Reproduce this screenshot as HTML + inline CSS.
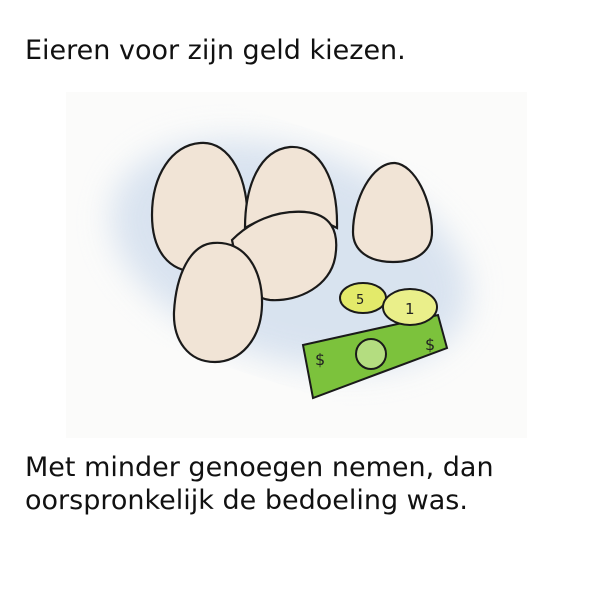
<!DOCTYPE html>
<html><head><style>
html,body{margin:0;padding:0;background:#fff;width:591px;height:591px;overflow:hidden}
.t{position:absolute;left:25px;font-family:"DejaVu Sans","Liberation Sans",sans-serif;font-size:27px;color:#111;line-height:33px;white-space:nowrap}
svg{position:absolute;left:0;top:0}
</style></head><body>
<div class="t" style="top:34px">Eieren voor zijn geld kiezen.</div>
<svg width="591" height="591" viewBox="0 0 591 591">
<defs><filter id="b"><feGaussianBlur stdDeviation="16"/></filter></defs>
<rect x="66" y="92" width="461" height="346" fill="#fbfbfa"/>
<ellipse cx="290" cy="255" rx="185" ry="105" transform="rotate(18 290 255)" fill="#d3dfee" opacity="0.85" filter="url(#b)"/>
<g stroke="#1a1a1a" stroke-width="2.2" fill="#f1e4d6">
<path d="M200 143 C230 140 250 180 247 225 C244 258 225 272 198 272 C168 272 152 250 152 215 C152 175 172 145 200 143Z"/>
<path d="M290 147 C320 145 338 180 337 228 L305 212 C280 210 255 222 245 228 C245 185 260 150 290 147Z"/>
<path d="M232 240 C250 222 275 210 305 212 C330 214 340 230 335 258 C330 285 300 302 270 300 C250 298 240 280 232 240Z"/>
<path d="M213 243 C245 240 263 270 262 305 C261 340 240 362 215 362 C188 362 173 340 174 312 C176 275 190 245 213 243Z"/>
<path d="M395 163 C415 165 432 200 432 232 C432 250 418 262 393 262 C368 262 353 250 353 232 C353 200 372 162 395 163Z"/>
</g>
<g stroke="#1a1a1a" stroke-width="2">
<path d="M303 345 L438 315 L447 348 L313 398Z" fill="#7cc23c"/>
<ellipse cx="371" cy="354" rx="15" ry="15" fill="#b4dd80"/>
<ellipse cx="363" cy="298" rx="23" ry="15" fill="#e3ea6a"/>
<ellipse cx="410" cy="307" rx="27" ry="18" fill="#eaef8a"/>
</g>
<g font-family="DejaVu Sans" font-size="16" fill="#222">
<text x="315" y="365">$</text><text x="425" y="350">$</text>
<text x="356" y="304" font-size="13">5</text><text x="405" y="314" font-size="15">1</text>
</g>
</svg>
<div class="t" style="top:451px">Met minder genoegen nemen, dan<br>oorspronkelijk de bedoeling was.</div>
</body></html>
